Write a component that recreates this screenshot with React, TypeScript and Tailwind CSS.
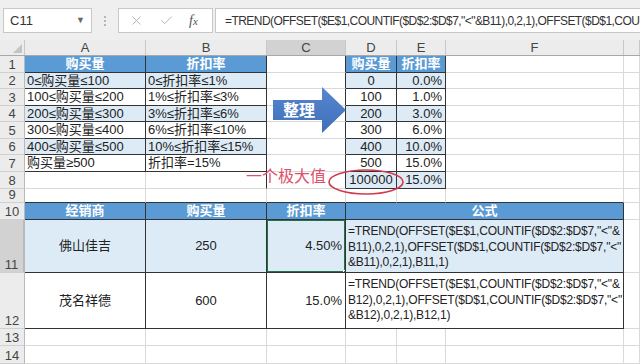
import React from "react"
import { X, Check } from "lucide-react"

const COLS = "grid-cols-[25px_121px_121px_79px_51px_49px_178px_16px]"
const ROW_H = [17, 16, 17, 16, 17, 16, 17, 17, 14, 17, 53, 56, 17, 18]

type CellProps = {
  children?: React.ReactNode
  r?: boolean
  b?: boolean
  span?: number
  bg?: string
  align?: "l" | "c" | "r"
  head?: boolean
  className?: string
}

function Cell({ children, r, b, span = 1, bg = "", align = "l", head, className = "" }: CellProps) {
  const spanCls = span === 3 ? "col-span-3" : ""
  const alignCls = align === "c" ? "justify-center" : align === "r" ? "justify-end pr-[3px]" : "justify-start pl-[2px]"
  return (
    <div
      className={`relative flex items-center overflow-hidden whitespace-nowrap border-r border-b ${
        r ? "border-r-[#333333]" : "border-r-[#d9d9d9]"
      } ${b ? "border-b-[#333333]" : "border-b-[#d9d9d9]"} ${spanCls} ${alignCls} ${
        head ? "bg-[#5b9bd5] text-white font-bold" : bg
      } ${className}`}
    >
      {children}
    </div>
  )
}

function RowHead({ n, sel }: { n: number; sel?: boolean }) {
  return (
    <div
      className={`flex items-end justify-center border-r border-b border-r-[#b9b9b9] border-b-[#d0d0d0] text-[13px] leading-[15px] text-[#444] ${
        sel ? "bg-[#d2d2d2] border-r-[#217346] border-r-2" : "bg-[#ececec]"
      }`}
    >
      {n}
    </div>
  )
}

const band = "bg-[#ddebf7]"

const t1 = [
  ["0≤购买量≤100", "0≤折扣率≤1%"],
  ["100≤购买量≤200", "1%≤折扣率≤3%"],
  ["200≤购买量≤300", "3%≤折扣率≤6%"],
  ["300≤购买量≤400", "6%≤折扣率≤10%"],
  ["400≤购买量≤500", "10%≤折扣率≤15%"],
  ["购买量≥500", "折扣率=15%"],
]

const t2 = [
  ["0", "0.0%"],
  ["100", "1.0%"],
  ["200", "3.0%"],
  ["300", "6.0%"],
  ["400", "10.0%"],
  ["500", "15.0%"],
  ["100000", "15.0%"],
]

function Formula({ row }: { row: number }) {
  return (
    <div className="self-start pt-[4px] text-[12px] leading-[15.5px] tracking-[-0.2px] text-[#222]">
      <div>=TREND(OFFSET($E$1,COUNTIF($D$2:$D$7,"&lt;"&amp;</div>
      <div>{`B${row}),0,2,1),OFFSET($D$1,COUNTIF($D$2:$D$7,"<"`}</div>
      <div>{`&B${row}),0,2,1),B${row},1)`}</div>
    </div>
  )
}

export default function App() {
  return (
    <div className="relative h-[364px] w-[640px] overflow-hidden bg-white font-['Liberation_Sans','Noto_Sans_CJK_SC',sans-serif] text-[13px] text-[#222]">
      {/* formula bar */}
      <div className="flex h-[40px] items-start gap-0 bg-[#efefef] pt-[8px]">
        <div className="ml-[3px] flex h-[25px] w-[89px] items-center justify-between border border-[#c8c8c8] bg-white pl-[6px] pr-[6px]">
          <span className="text-[13px] text-[#333]">C11</span>
          <span className="text-[9px] text-[#666]">▼</span>
        </div>
        <div className="flex h-[25px] w-[26px] flex-col items-center justify-center gap-[2px]">
          <span className="h-[2px] w-[2px] bg-[#b5b5b5]" />
          <span className="h-[2px] w-[2px] bg-[#b5b5b5]" />
          <span className="h-[2px] w-[2px] bg-[#b5b5b5]" />
        </div>
        <div className="flex h-[25px] w-[95px] items-center border border-[#c8c8c8] bg-white pl-[10px]">
          <X size={15} strokeWidth={1.5} className="text-[#b0b0b0]" />
          <Check size={15} strokeWidth={1.5} className="ml-[15px] text-[#b0b0b0]" />
          <span className="ml-[15px] font-['Liberation_Serif',serif] text-[14px] italic text-[#555]">
            f<span className="text-[11px]">x</span>
          </span>
        </div>
        <div className="ml-[2px] flex h-[25px] flex-1 items-center overflow-hidden whitespace-nowrap border border-r-0 border-[#c8c8c8] bg-white pl-[9px] text-[12px] tracking-[-0.55px] text-[#333]">
          =TREND(OFFSET($E$1,COUNTIF($D$2:$D$7,"&lt;"&amp;B11),0,2,1),OFFSET($D$1,COUN
        </div>
      </div>

      {/* column headers */}
      <div className={`grid ${COLS} h-[16px] border-b border-[#a8a8a8] bg-[#ececec] text-[13px] leading-[15px] text-[#444]`}>
        <div className="relative border-r border-[#c8c8c8]">
          <svg className="absolute bottom-[2px] right-[2px]" width="9" height="9" viewBox="0 0 9 9">
            <polygon points="9,0 9,9 0,9" fill="#c4c4c4" />
          </svg>
        </div>
        {["A", "B", "C", "D", "E", "F", ""].map((c, i) => (
          <div
            key={i}
            className={`flex items-center justify-center border-r border-[#c8c8c8] ${c === "C" ? "bg-[#d2d2d2]" : ""}`}
          >
            {c}
          </div>
        ))}
      </div>

      {/* sheet */}
      <div className={`grid ${COLS}`} style={{ gridTemplateRows: ROW_H.map((h) => `${h}px`).join(" ") }}>
        {/* row 1 */}
        <RowHead n={1} />
        <Cell head r b align="c">购买量</Cell>
        <Cell head r b align="c">折扣率</Cell>
        <Cell r />
        <Cell head r b align="c">购买量</Cell>
        <Cell head r b align="c">折扣率</Cell>
        <Cell />
        <Cell />

        {/* rows 2-8 */}
        {t2.map((d, i) => {
          const n = i + 2
          const row1 = t1[i]
          const bg = i % 2 === 0 ? band : "bg-white"
          return (
            <React.Fragment key={n}>
              <RowHead n={n} />
              {row1 ? (
                <>
                  <Cell r b bg={bg}>{row1[0]}</Cell>
                  <Cell r b bg={bg}>{row1[1]}</Cell>
                </>
              ) : (
                <>
                  <Cell />
                  <Cell r />
                </>
              )}
              <Cell r />
              <Cell r b bg={bg} align="c">{d[0]}</Cell>
              <Cell r b bg={bg} align="r">{d[1]}</Cell>
              <Cell />
              <Cell />
            </React.Fragment>
          )
        })}

        {/* row 9 */}
        <RowHead n={9} />
        <Cell b />
        <Cell b />
        <Cell b />
        <Cell b />
        <Cell b />
        <Cell b />
        <Cell />

        {/* row 10 */}
        <RowHead n={10} />
        <Cell head r b align="c">经销商</Cell>
        <Cell head r b align="c">购买量</Cell>
        <Cell head r b align="c">折扣率</Cell>
        <Cell head r b align="c" span={3}>公式</Cell>
        <Cell />

        {/* row 11 */}
        <RowHead n={11} sel />
        <Cell r b bg={band} align="c">佛山佳吉</Cell>
        <Cell r b bg={band} align="c">250</Cell>
        <Cell r b bg={band} align="r">
          4.50%
          <div className="absolute inset-[-1px] border-2 border-[#217346]" />
          <div className="absolute bottom-[-3px] right-[-3px] h-[5px] w-[5px] border border-white bg-[#217346]" />
        </Cell>
        <Cell r b bg={band} span={3} className="items-start">
          <Formula row={11} />
        </Cell>
        <Cell />

        {/* row 12 */}
        <RowHead n={12} />
        <Cell r b align="c">茂名祥德</Cell>
        <Cell r b align="c">600</Cell>
        <Cell r b align="r">15.0%</Cell>
        <Cell r b span={3} className="items-start">
          <Formula row={12} />
        </Cell>
        <Cell />

        {[13, 14].map((n) => (
          <React.Fragment key={n}>
            <RowHead n={n} />
            <Cell />
            <Cell />
            <Cell />
            <Cell />
            <Cell />
            <Cell />
            <Cell />
          </React.Fragment>
        ))}
      </div>

      {/* arrow shape */}
      <svg className="absolute left-[270px] top-[85px]" width="80" height="50" viewBox="0 0 80 50">
        <defs>
          <linearGradient id="ag" x1="0" y1="0" x2="0" y2="1">
            <stop offset="0" stopColor="#5586cf" />
            <stop offset="1" stopColor="#3e6fb8" />
          </linearGradient>
        </defs>
        <polygon points="3,15 52,15 52,2 76,25 52,48 52,35 3,35" fill="url(#ag)" />
        <text x="29" y="31" textAnchor="middle" fill="#fff" fontSize="16" fontWeight="bold" fontFamily="Noto Sans CJK SC, sans-serif">
          整理
        </text>
      </svg>

      {/* annotation */}
      <div className="absolute left-[246px] top-[167px] text-[16px] leading-[20px] text-[#e0506a]">一个极大值</div>
      <svg className="absolute left-[326px] top-[168px]" width="80" height="28" viewBox="0 0 80 28">
        <ellipse cx="40" cy="14" rx="37" ry="12" fill="none" stroke="#d4384c" strokeWidth="1.6" />
      </svg>
    </div>
  )
}
